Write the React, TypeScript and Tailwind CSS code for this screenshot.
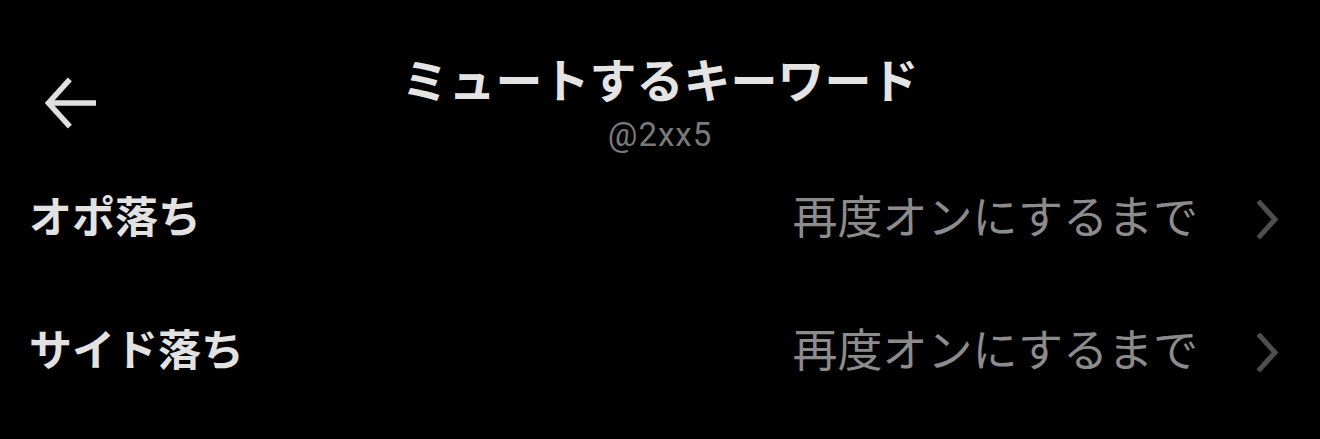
import React from "react";

function Chevron() {
  return (
    <svg width="24" height="40" viewBox="0 0 24 40" fill="none">
      <path d="M4 3 L19 19.5 L4 36" stroke="#4e4e4e" strokeWidth="5" strokeLinecap="square" />
    </svg>
  );
}

function Row({ label }: { label: string }) {
  return (
    <div className="flex items-center justify-between h-[133px] pl-[29px] pr-[40px]">
      <span className="text-[43px] font-semibold text-[#e2e2e2] leading-none">{label}</span>
      <div className="flex items-center gap-[58px]">
        <span className="text-[45px] text-[#8c8c8c] leading-none">再度オンにするまで</span>
        <div className="mt-[10px]">
          <Chevron />
        </div>
      </div>
    </div>
  );
}

export default function App() {
  return (
    <div
      className="w-[1320px] h-[439px] bg-black overflow-hidden"
      style={{ fontFamily: '"Noto Sans CJK JP", "Noto Sans", sans-serif' }}
    >
      <div className="relative flex flex-col items-center pt-[54px]">
        <div className="absolute left-[43px] top-[77px]">
          <svg width="56" height="52" viewBox="0 0 56 52" fill="none">
            <path d="M25 4.5 L5.5 26 L25 47.5" stroke="#e0e0e0" strokeWidth="5.5" strokeLinecap="square" />
            <path d="M8 26 L53 26" stroke="#e0e0e0" strokeWidth="5.5" />
          </svg>
        </div>
        <h1 className="text-[47px] font-bold text-[#e4e4e4] leading-none">ミュートするキーワード</h1>
        <div
          className="mt-[17px] text-[33px] text-[#7a7a7a] leading-none tracking-[1px]"
          style={{ fontFamily: 'Roboto, "Liberation Sans", sans-serif' }}
        >
          @2xx5
        </div>
      </div>
      <div className="mt-[-3px]">
        <Row label="オポ落ち" />
        <Row label="サイド落ち" />
      </div>
    </div>
  );
}
